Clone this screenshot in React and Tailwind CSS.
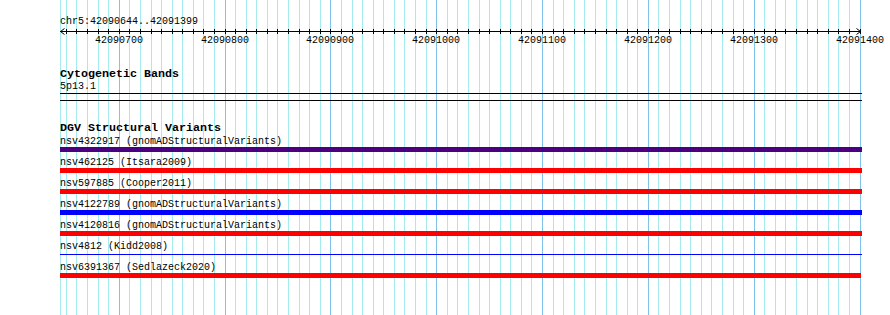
import React from 'react';

const START = 42090644;
const SCALE = 800 / 756;
const xOf = (bp) => Math.floor(60 + (bp - START) * SCALE);

const positions = [];
for (let bp = 42090650; bp <= 42091400; bp += 10) positions.push(bp);

const variants = [
  { label: 'nsv4322917 (gnomADStructuralVariants)', color: 'bg-[#4b0082]' },
  { label: 'nsv462125 (Itsara2009)', color: 'bg-[#ff0000]' },
  { label: 'nsv597885 (Cooper2011)', color: 'bg-[#ff0000]' },
  { label: 'nsv4122789 (gnomADStructuralVariants)', color: 'bg-[#0000ff]' },
  { label: 'nsv4120816 (gnomADStructuralVariants)', color: 'bg-[#ff0000]' },
  { label: 'nsv4812 (Kidd2008)', color: 'bg-[#0000ff]', thin: true },
  { label: 'nsv6391367 (Sedlazeck2020)', color: 'bg-[#ff0000]', short: true },
];

const Grid = () => (
  <svg className="absolute inset-0" width="890" height="315">
    <line x1="60.5" y1="0" x2="60.5" y2="315" stroke="#a4ecf0" />
    {positions.map((bp) => {
      const x = xOf(bp) + 0.5;
      const major = bp % 100 === 0;
      return (
        <line
          key={bp}
          x1={x}
          y1="0"
          x2={x}
          y2="315"
          stroke={major ? '#80c4ec' : '#a4ecf0'}
        />
      );
    })}
  </svg>
);

const Ruler = () => (
  <svg className="block" width="890" height="18">
    <line x1="60" y1="4.5" x2="861" y2="4.5" stroke="#000" />
    {/* arrow heads */}
    <path d="M64.5 1.5 L60.5 4.5 L64.5 7.5" fill="none" stroke="#000" />
    <path d="M856.5 1.5 L860.5 4.5 L856.5 7.5" fill="none" stroke="#000" />
    {positions.map((bp) => {
      const x = xOf(bp) + 0.5;
      return <line key={bp} x1={x} y1="2" x2={x} y2="7" stroke="#000" />;
    })}
    {positions
      .filter((bp) => bp % 100 === 0)
      .map((bp) => (
        <text
          key={bp}
          x={xOf(bp) - 24}
          y="16"
          fontFamily="'Liberation Mono', monospace"
          fontSize="10"
          fill="#000"
        >
          {bp}
        </text>
      ))}
  </svg>
);

export default function App() {
  return (
    <div className="relative w-[890px] h-[315px] overflow-hidden bg-white text-black font-['Liberation_Mono',monospace]">
      <Grid />
      <div className="relative">
        <div className="pl-[60px] pt-[17px] text-[10px] leading-[10px] whitespace-pre">
          chr5:42090644..42091399
        </div>
        <Ruler />

        {/* Cytogenetic Bands track */}
        <div className="pl-[60px]">
          <div className="mt-[23px] text-[11.67px] leading-[13px] font-bold whitespace-pre">
            Cytogenetic Bands
          </div>
          <div className="mt-[1px] text-[10px] leading-[10px]">5p13.1</div>
          <div className="mt-[1px] h-px w-[802px] bg-black" />
          <div className="mt-[6px] h-px w-[802px] bg-black" />

          {/* DGV track */}
          <div className="mt-[21px] text-[11.67px] leading-[13px] font-bold whitespace-pre">
            DGV Structural Variants
          </div>
          <div className="mt-[1px] flex flex-col">
            {variants.map((v) => (
              <div key={v.label} className="h-[21px] flex flex-col">
                <div className="text-[10px] leading-[11px] whitespace-pre">{v.label}</div>
                <div className="h-[5px] flex items-center">
                  <div
                    className={`${v.color} ${v.thin ? 'h-px' : 'h-[5px]'} ${
                      v.short ? 'w-[801px]' : 'w-[802px]'
                    }`}
                  />
                </div>
              </div>
            ))}
          </div>
        </div>
      </div>
    </div>
  );
}
